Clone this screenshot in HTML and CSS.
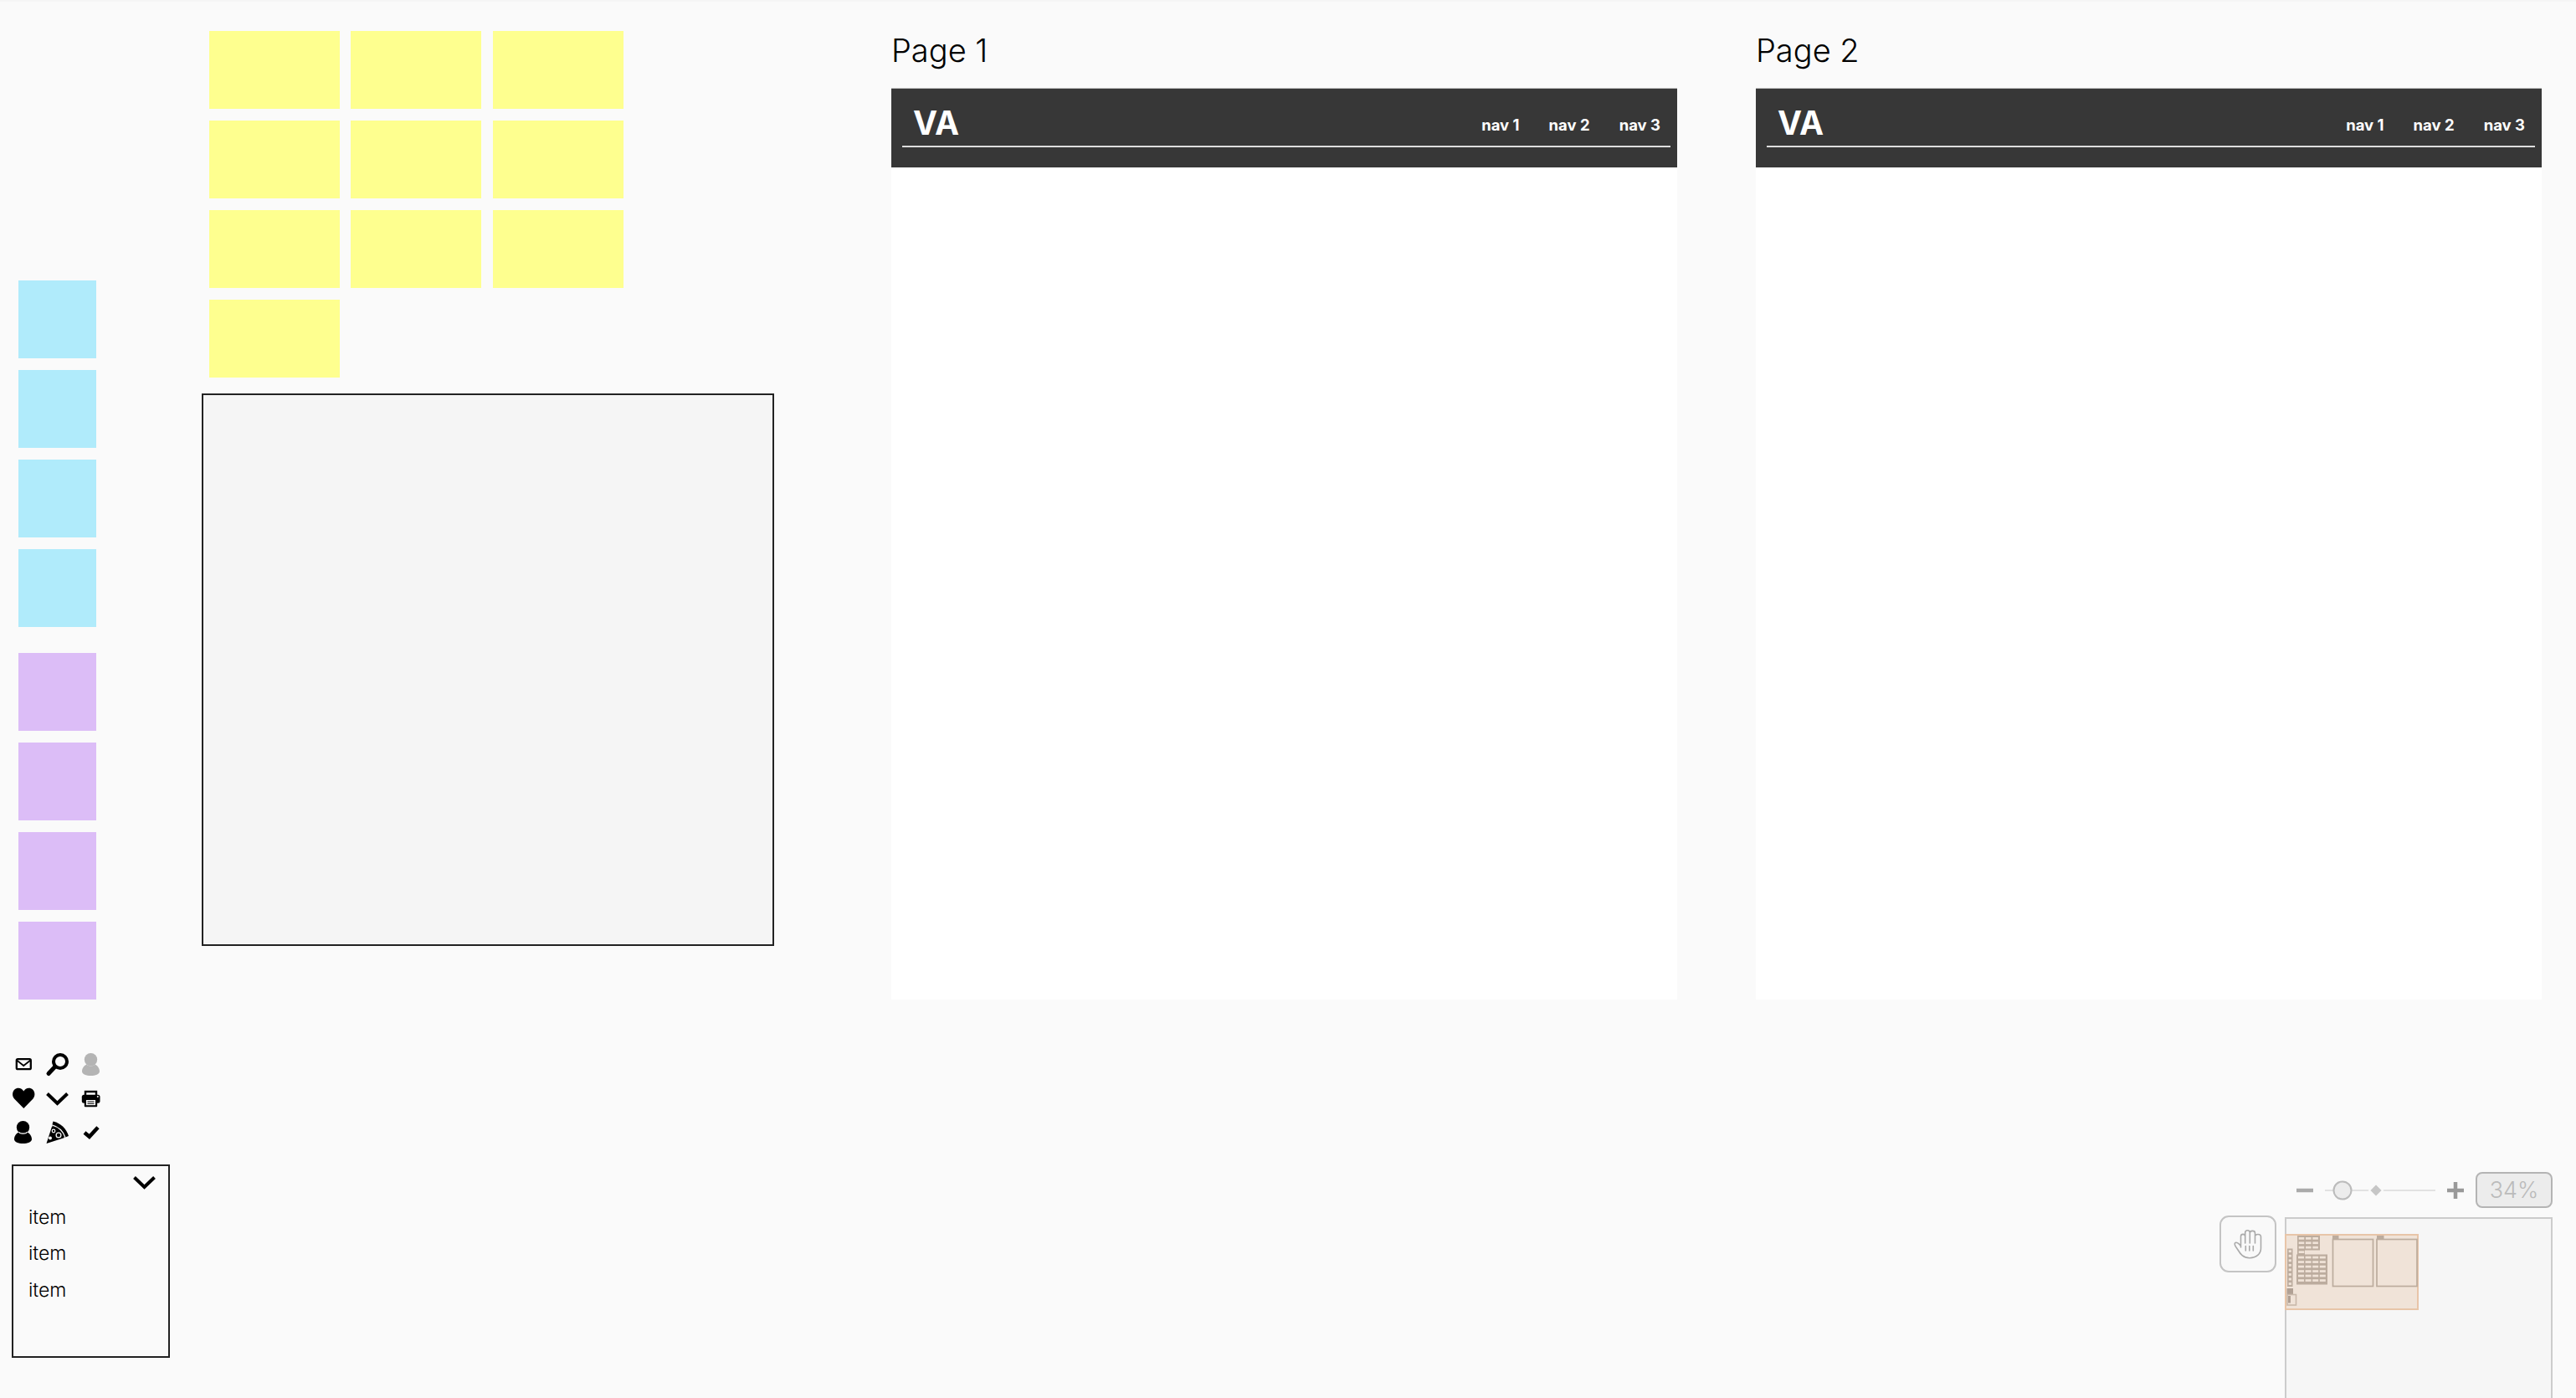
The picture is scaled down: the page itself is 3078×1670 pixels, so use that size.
FILE: index.html
```html
<!DOCTYPE html>
<html lang="en">
<head>
  <meta charset="UTF-8">
  <title>Board</title>
  <link rel="stylesheet" href="styles.css">
</head>
<body>
  <main class="board">
    <section class="col-tools">
      <div class="stack">
        <div class="note note-blue"></div>
        <div class="note note-blue"></div>
        <div class="note note-blue"></div>
        <div class="note note-blue"></div>
      </div>
      <div class="stack stack-purple">
        <div class="note note-purple"></div>
        <div class="note note-purple"></div>
        <div class="note note-purple"></div>
        <div class="note note-purple"></div>
      </div>

      <div class="icons">
        <svg viewBox="0 0 28 28"><rect x="5.800" y="7.200" width="17" height="12" rx="1.500" class="line" stroke-width="2.300"/><path d="M6 8.500 14.200 15 22.500 8.500" class="line" stroke-width="1.800"/></svg>
        <svg viewBox="0 0 28 28"><circle cx="17" cy="10" r="8" class="line" stroke-width="4"/><path d="M10.500 16.500 3 24.500" class="line" stroke-width="5" stroke-linecap="round"/></svg>
        <svg viewBox="0 0 28 28" class="muted"><path d="M3 22C3 17 6.500 14.500 8.500 13.500 10 16 17 16 18.500 13.500 20.500 14.500 24 17 24 22 24 25 19 27 13.500 27 8 27 3 25 3 22Z"/><circle cx="13.500" cy="7.700" r="7.700"/></svg>

        <svg viewBox="0 0 28 28"><path d="M14.300 25 3 13.500C-.5 9.500 1 3 5.500 1.300 9 0 12.500 1.500 14.300 4.500 16 1.500 19.500 0 23 1.300 27.500 3 29 9.500 25.500 13.500Z"/></svg>
        <svg viewBox="0 0 28 28"><path d="M1.500 7.500 13.500 19 25.500 7.500" class="line" stroke-width="4"/></svg>
        <svg viewBox="0 0 28 28"><rect x="7" y="5" width="13" height="6" class="line" stroke-width="2.400"/><rect x="2.800" y="8.800" width="21.700" height="10" rx="2.500"/><rect x="5.800" y="13" width="15.400" height="10.200" rx="1"/><rect x="8" y="15" width="11" height="6.200" fill="#fafafa"/><path d="M9.500 17H17.500M9.500 19.300H17.500" class="line" stroke-width="1"/><circle cx="21.800" cy="11" r="1" fill="#fafafa"/></svg>

        <svg viewBox="0 0 28 28"><path d="M3 22C3 17 6.500 14.500 8.500 13.500 10 16 17 16 18.500 13.500 20.500 14.500 24 17 24 22 24 25 19 27 13.500 27 8 27 3 25 3 22Z"/><circle cx="13.500" cy="7.700" r="7.700"/><path d="M8.500 13.200C10 15.800 17 15.800 18.500 13.200" stroke="#fafafa" stroke-width="1.200" fill="none"/></svg>
        <svg viewBox="0 0 28 28"><path d="M8.500 .5C17.500 2.500 24.500 9.500 27 18L22 20 7 6Z"/><path d="M7 4.800C14.500 6.800 20.500 12.300 23 19.800" class="bg-line" stroke-width="1.300"/><path d="M.5 27 7 6.800C14 8.500 19.500 13.500 21.500 20.300Z"/><circle cx="15" cy="17" r="2.900" class="bg-line" stroke-width="1.300"/><circle cx="9" cy="12" r="1.800" class="bg-line" stroke-width="1.200"/><circle cx="5" cy="20.500" r="2" fill="#fafafa"/></svg>
        <svg viewBox="0 0 28 28"><path d="M6 14 11.800 18.800 22 7.800" class="line" stroke-width="4.500"/></svg>
      </div>

      <div class="dropdown">
        <svg class="dropdown-arrow" viewBox="0 0 28 28"><path d="M1.500 7.500 13.500 19 25.500 7.500" class="line" stroke-width="4"/></svg>
        <div class="dropdown-item">item</div>
        <div class="dropdown-item">item</div>
        <div class="dropdown-item">item</div>
      </div>
    </section>

    <section class="col-notes">
      <div class="note-grid">
        <div class="note note-yellow"></div>
        <div class="note note-yellow"></div>
        <div class="note note-yellow"></div>
        <div class="note note-yellow"></div>
        <div class="note note-yellow"></div>
        <div class="note note-yellow"></div>
        <div class="note note-yellow"></div>
        <div class="note note-yellow"></div>
        <div class="note note-yellow"></div>
        <div class="note note-yellow"></div>
      </div>
      <div class="frame"></div>
    </section>

    <section class="page">
      <h2 class="page-title">Page 1</h2>
      <div class="sheet">
        <header class="sheet-head">
          <div class="sheet-bar">
            <span class="logo">VA</span>
            <nav class="nav"><span>nav 1</span><span>nav 2</span><span>nav 3</span></nav>
          </div>
        </header>
      </div>
    </section>

    <section class="page page-second">
      <h2 class="page-title">Page 2</h2>
      <div class="sheet">
        <header class="sheet-head">
          <div class="sheet-bar">
            <span class="logo">VA</span>
            <nav class="nav"><span>nav 1</span><span>nav 2</span><span>nav 3</span></nav>
          </div>
        </header>
      </div>
    </section>
  </main>

  <aside class="controls">
    <div class="zoom-row">
      <svg class="zoom-slider" viewBox="0 0 204 24">
        <path d="M0 12H20" stroke="#aaa" stroke-width="4.500"/>
        <path d="M34 12H166" stroke="#e2e2e2" stroke-width="2"/>
        <path d="M95 4 103 12 95 20 87 12Z" fill="#c6c6c6" stroke="#fafafa" stroke-width="2"/>
        <circle cx="55" cy="12" r="10.500" fill="#ececec" stroke="#bbb" stroke-width="2"/>
        <path d="M180 12H200M190 2V22" stroke="#999" stroke-width="4.500"/>
      </svg>
      <div class="zoom-value">34%</div>
    </div>
    <div class="map-row">
      <button class="hand">
        <svg viewBox="0 0 36 36"><path d="M9.500 22V9C9.500 5.500 14.700 5.500 14.700 9V4.500C14.700 .8 20.300 .8 20.300 4.500V5C20.300 1.500 26.500 1.500 26.500 5V9C26.500 5.500 33.500 5.500 33.500 9.500V23C33.500 30 28 34.700 20 34.700 12 34.700 9 30 6 25 4.500 22.500 1 19 2.500 17 4 15 7.500 17.500 9.500 20.500M14.700 9V17M20.300 5V17M26.500 9V17M15.300 20.500V26M19.800 20.500V26M24.300 20.500V26" fill="none" stroke="#aaa" stroke-width="1.600" stroke-linecap="round" stroke-linejoin="round"/></svg>
      </button>
      <div class="minimap">
        <svg viewBox="0 0 320 216">
          <rect x="1" y="21" width="158" height="89" fill="#f0e3d8" stroke="#e8c5a8" stroke-width="2"/>
          <g id="mini-items">
            <rect x="15" y="22" width="27" height="17.500" fill="#bcac9e"/>
            <rect x="15" y="39" width="9" height="6" fill="#bcac9e"/>
            <rect x="14" y="44.500" width="37" height="36" fill="#bcac9e"/>
            <rect x="3" y="37.500" width="6.500" height="45.500" fill="#bcac9e"/>
            <rect x="2.500" y="85" width="7.500" height="7" fill="#b0a094"/>
            <rect x="3" y="92.500" width="10.500" height="12.500" fill="none" stroke="#c8b8aa" stroke-width="1.600"/>
            <rect x="4" y="94" width="3" height="8.500" fill="#b0a094"/>
            <rect x="57" y="22" width="7.500" height="4.500" fill="#bcac9e"/>
            <rect x="57.500" y="26.500" width="48" height="56" fill="none" stroke="#bcac9e" stroke-width="1.700"/>
            <rect x="110" y="22" width="8.500" height="4.500" fill="#bcac9e"/>
            <rect x="110" y="26.500" width="48" height="56" fill="none" stroke="#bcac9e" stroke-width="1.700"/>
          </g>
        </svg>
      </div>
    </div>
  </aside>

  <script>
    // little cells of the minimap
    const mini = document.getElementById("mini-items");
    function cell(x, y, w, h) {
      const r = document.createElementNS("http://www.w3.org/2000/svg", "rect");
      r.setAttribute("x", x);
      r.setAttribute("y", y);
      r.setAttribute("width", w);
      r.setAttribute("height", h);
      r.setAttribute("fill", "#f0e3d8");
      mini.appendChild(r);
    }
    for (let row = 0; row < 3; row++) {
      for (let col = 0; col < 3; col++) cell(16.7 + col * 8.3, 24 + row * 5.4, 6.6, 2.7);
    }
    cell(16.7, 40.3, 6.6, 2.7);
    for (let row = 0; row < 6; row++) {
      for (let col = 0; col < 4; col++) cell(16 + col * 8.6, 46.7 + row * 5.5, 7, 2.7);
    }
    for (let row = 0; row < 8; row++) cell(4.7, 39.3 + row * 5.55, 3.2, 2.8);
  </script>
</body>
</html>
```

FILE: styles.css
```css
* {
  box-sizing: border-box;
}

html, body {
  margin: 0;
  height: 1670px;
  overflow: hidden;
}

body {
  position: relative;
  background: #fafafa;
  border-top: 2px solid #f5f5f5;
  font-family: Inter, "Liberation Sans", sans-serif;
  color: #111;
}

svg {
  display: block;
}

.line {
  fill: none;
  stroke: #000;
}

.bg-line {
  fill: none;
  stroke: #fafafa;
}

.board {
  display: flex;
  align-items: flex-start;
}

/* left column */
.col-tools {
  width: 241px;
  padding: 333px 0 0 14px;
}

.stack {
  display: flex;
  flex-direction: column;
  gap: 14px;
  margin-left: 8px;
}

.stack-purple {
  margin-top: 31px;
}

.note {
  width: 93px;
  height: 93px;
}

.note-blue {
  background: #b0ebfb;
}

.note-purple {
  background: #dcbdf7;
}

.note-yellow {
  width: 156px;
  background: #feff8f;
}

.icons {
  display: grid;
  grid-template-columns: repeat(3, 28px);
  grid-auto-rows: 28px;
  gap: 12.5px;
  margin-top: 64px;
}

.icons svg {
  width: 28px;
  height: 28px;
  overflow: visible;
}

.muted {
  fill: #b4b4b4;
}

.dropdown {
  width: 189px;
  height: 231px;
  margin-top: 24px;
  padding: 6px 14px 0 18px;
  border: 2px solid #222;
}

.dropdown-arrow {
  width: 28px;
  height: 28px;
  margin: 0 0 6px auto;
}

.dropdown-item {
  height: 43.3px;
  color: #000;
  font-size: 23px;
  font-weight: 300;
  line-height: 43.3px;
}

/* yellow notes and grey frame */
.col-notes {
  width: 684px;
  padding-top: 34.5px;
}

.note-grid {
  display: grid;
  grid-template-columns: repeat(3, 156px);
  gap: 14px 13.4px;
  padding-left: 9px;
}

.frame {
  height: 660px;
  margin-top: 19px;
  background: #f5f5f5;
  border: 2px solid #222;
}

/* pages */
.page {
  width: 939px;
  margin-left: 140px;
}

.page-second {
  margin-left: 94px;
}

.page-title {
  height: 102.5px;
  margin: 0;
  padding-top: 36px;
  color: #000;
  font-size: 38px;
  font-weight: 300;
  line-height: 44px;
}

.sheet {
  height: 1089px;
  background: #fff;
}

.sheet-head {
  height: 95.500px;
  padding: 0 8px 0 13px;
  background: #373737;
  border-top: 1px solid #bbb;
}

.sheet-bar {
  display: flex;
  justify-content: space-between;
  align-items: flex-end;
  height: 70px;
  padding: 0 12px 8px 13px;
  border-bottom: 2px solid #ddd;
  color: #fff;
}

.logo {
  font-size: 39px;
  font-weight: 700;
  line-height: 38px;
}

.nav {
  display: flex;
  gap: 35px;
  font-size: 18.5px;
  font-weight: 700;
  line-height: 22px;
  margin-bottom: 6px;
}

/* bottom right controls */
.controls {
  position: absolute;
  right: 28px;
  bottom: 0;
  width: 398px;
  height: 270px;
}

.zoom-row {
  display: flex;
  justify-content: flex-end;
  align-items: center;
  gap: 10px;
  height: 43px;
}

.zoom-slider {
  width: 204px;
  height: 24px;
}

.zoom-value {
  width: 92px;
  height: 43px;
  border: 2px solid #b4b4b4;
  border-radius: 8px;
  background: #ececec;
  color: #bbb;
  font-size: 27px;
  font-weight: 300;
  line-height: 40px;
  text-align: center;
}

.map-row {
  display: flex;
  justify-content: space-between;
  margin-top: 9px;
}

.hand {
  width: 68px;
  height: 68px;
  padding: 14px;
  border: 2px solid #c4c4c4;
  border-radius: 11px;
  background: #f9f9f9;
}

.hand svg {
  width: 36px;
  height: 36px;
}

.minimap {
  width: 320px;
  height: 216px;
  margin-top: 2px;
  background: #f6f6f6;
  border: 2px solid #ccc;
  border-bottom: 0;
}

.minimap svg {
  margin: -2px 0 0 -2px;
  width: 320px;
  height: 216px;
}
```
